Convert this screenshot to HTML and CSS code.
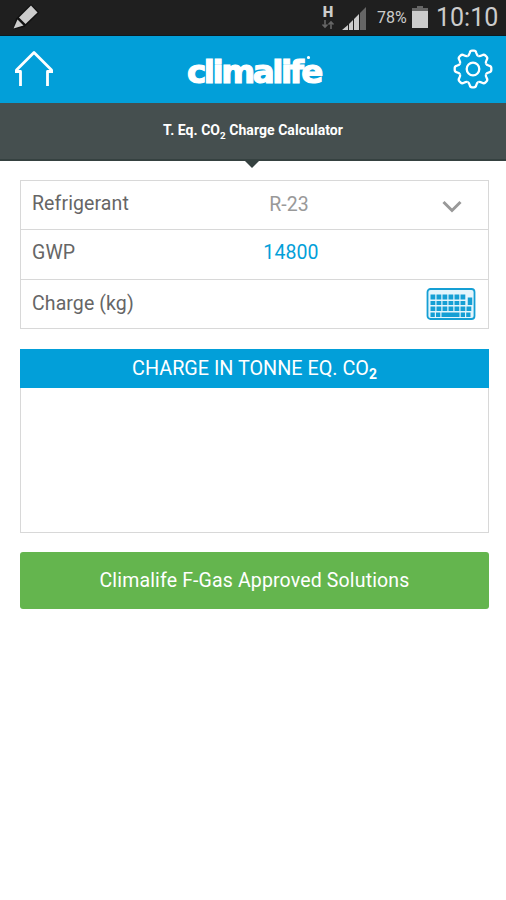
FILE: index.html
```
<!DOCTYPE html>
<html lang="en">
<head>
    <meta charset="UTF-8">
    <meta name="viewport" content="width=device-width, initial-scale=1.0">
    <title>T. Eq. CO2 Charge Calculator</title>
    <link rel="stylesheet" href="styles.css">
</head>
<body>
    <div class="status">
        <svg class="pencil" width="28" height="28" viewBox="0 0 28 28">
            <path d="M1 26.500l3-11L19 1l8.500 8.500L12.500 24z" fill="#111"/>
            <path d="M7 14.500L19 2.500l6.500 7L13.500 21z" fill="#ccc"/>
            <path d="M5.500 16.500l6 6-10 3z" fill="#ccc"/>
        </svg>
        <div class="network">
            <span>H</span>
            <svg width="14" height="9" viewBox="0 0 14 9" fill="none" stroke="#666" stroke-width="1.600">
                <path d="M4 0v7M1.500 4.500L4 7l2.500-2.500M10 9V2M7.500 4.500L10 2l2.500 2.500"/>
            </svg>
        </div>
        <svg class="signal" width="25" height="23" viewBox="0 0 25 23">
            <path d="M0 23l6-5v5zM7 23v-6l4-4v10zM12 23V12l5-5v16z" fill="#ccc"/>
            <path d="M18 23V6l6-6v23z" fill="#666"/>
        </svg>
        <span class="percent">78%</span>
        <svg class="battery" width="16" height="22" viewBox="0 0 16 22">
            <path d="M5 0h6v2H5zM0 2h16v3H0z" fill="#666"/>
            <path d="M0 5h16v17H0z" fill="#ccc"/>
        </svg>
        <span class="clock">10:10</span>
    </div>

    <header>
        <svg class="home" width="40" height="38" viewBox="0 0 40 38" fill="none" stroke="#fff" stroke-width="2.800">
            <path d="M1 21.500h5.500V36M39 21.500h-5.500V36M2 20.500L20 2.500l18 18" stroke-linejoin="round"/>
        </svg>
        <svg class="logo" width="140" height="34" viewBox="0 0 140 34">
            <text x="4" y="30" textLength="134" lengthAdjust="spacingAndGlyphs">climalife</text>
            <circle cx="125.500" cy="4.500" r="1"/>
        </svg>
        <svg class="gear" width="40" height="40" viewBox="-20 -20 40 40" fill="none" stroke="#fff" stroke-width="2.300">
            <defs>
                <path id="tooth" d="M-5.400-13C-4.100-13.500-3.700-14.500-3.300-16Q-2.800-18.300-1-18.300H1Q2.800-18.300 3.300-16C3.700-14.500 4.100-13.500 5.400-13"/>
            </defs>
            <use href="#tooth"/>
            <use href="#tooth" transform="rotate(45)"/>
            <use href="#tooth" transform="rotate(90)"/>
            <use href="#tooth" transform="rotate(135)"/>
            <use href="#tooth" transform="rotate(180)"/>
            <use href="#tooth" transform="rotate(225)"/>
            <use href="#tooth" transform="rotate(270)"/>
            <use href="#tooth" transform="rotate(315)"/>
            <circle r="6.300"/>
        </svg>
    </header>

    <h1>T. Eq. CO<span class="sub">2</span> Charge Calculator</h1>

    <main>
        <div class="fields">
            <div class="row">
                <span class="label">Refrigerant</span>
                <span class="value muted">R-23</span>
                <svg class="chevron" width="20" height="14" viewBox="0 0 20 14" fill="none" stroke="#999" stroke-width="3">
                    <path d="M1.500 2L10 10.500 18.500 2"/>
                </svg>
            </div>
            <div class="row">
                <span class="label">GWP</span>
                <span class="value">14800</span>
            </div>
            <div class="row">
                <span class="label">Charge (kg)</span>
                <svg class="keyboard" width="50" height="32" viewBox="0 0 50 32" fill="none" stroke="#159fd4">
                    <rect x="1.500" y="1" width="47" height="30" rx="3" fill="#e4f5fc" stroke-width="1.800"/>
                    <path d="M4.500 9h36" stroke-width="5" stroke-dasharray="4.800 1.200"/>
                    <path d="M4.500 15h36" stroke-width="4" stroke-dasharray="4.800 1.200"/>
                    <path d="M44 9.500v7.500" stroke-width="4.500"/>
                    <path d="M4.500 20.800h42" stroke-width="4.500" stroke-dasharray="4.800 1.200"/>
                    <path d="M4.500 26.800h42" stroke-width="4.500" stroke-dasharray="4.300 1.200 4.300 1.200 18 1.200 4.300 1.200 4.300 2"/>
                </svg>
            </div>
        </div>

        <section class="result">
            <h2>CHARGE IN TONNE EQ. CO<span class="sub">2</span></h2>
        </section>

        <button type="button">Climalife F-Gas Approved Solutions</button>
    </main>
</body>
</html>
```
FILE: styles.css
```
* {
    box-sizing: border-box;
    margin: 0;
    padding: 0;
}

:root {
    --blue: #029fd9;
    --line: #d8d8d8;
}

body {
    font-family: Roboto, "Liberation Sans", sans-serif;
    background: #fff;
    color: #666;
}

svg {
    display: block;
    flex: none;
}

.status {
    display: flex;
    align-items: flex-start;
    height: 36px;
    padding: 0 8px 0 12px;
    background: #1f1f1f;
    border-bottom: 1px solid #0c1b22;
    color: #ccc;
}

.pencil {
    margin-top: 3px;
}

.network {
    display: flex;
    flex-direction: column;
    align-items: center;
    margin: 5px 7px 0 auto;
    font-size: 15px;
    font-weight: 900;
    line-height: 15px;
}

.signal {
    margin-top: 7px;
}

.percent {
    width: 31px;
    margin-left: 10px;
    font-size: 16px;
    line-height: 36px;
    white-space: nowrap;
}

.battery {
    margin: 6px 0 0 4px;
}

.clock {
    width: 62px;
    margin-left: 8px;
    font-size: 25px;
    line-height: 35px;
    white-space: nowrap;
}

header {
    display: flex;
    align-items: center;
    justify-content: space-between;
    height: 67px;
    padding: 0 13px 0 14px;
    background: var(--blue);
}

.home,
.gear {
    margin-bottom: 1px;
}

.logo {
    margin-right: 1px;
    overflow: visible;
    font: 700 32px "DejaVu Sans", sans-serif;
    letter-spacing: -2.4px;
    fill: #fff;
    stroke: #fff;
    stroke-width: 1.2px;
}

h1 {
    position: relative;
    height: 58px;
    background: #454f4f;
    border-bottom: 2px solid #354140;
    color: #fff;
    font-size: 14px;
    font-weight: 700;
    line-height: 55px;
    text-align: center;
    letter-spacing: 0.05px;
}

h1::after {
    content: "";
    position: absolute;
    top: 57px;
    left: 244px;
    border: 8.5px solid transparent;
    border-top-color: #354140;
    border-bottom: 0;
}

.sub {
    position: relative;
    top: 4px;
    font-size: 0.7em;
    font-weight: 700;
}

main {
    padding: 19px 17px 0 20px;
}

.fields {
    border: 1px solid var(--line);
}

.row {
    display: grid;
    grid-template-columns: 180px 158px 1fr;
    align-items: center;
    height: 48px;
    padding: 0 12px 0 11px;
}

.row + .row {
    height: 50px;
    border-top: 1px solid var(--line);
}

.row:last-child {
    height: 49px;
}

.label,
.value {
    padding-bottom: 3px;
    font-size: 19.5px;
    line-height: 24px;
    letter-spacing: 0.1px;
}

.value {
    color: var(--blue);
    text-align: center;
}

.row:last-child .label {
    padding-bottom: 1px;
}

.muted {
    padding-bottom: 0;
    padding-right: 4px;
    color: #999;
}

.chevron {
    justify-self: end;
    margin: 3px 14px 0 0;
}

.keyboard {
    grid-column: 3;
    justify-self: end;
}

.result {
    height: 184px;
    margin-top: 20px;
    border: 1px solid var(--line);
    border-top: 0;
}

h2 {
    height: 39px;
    margin: 0 -1px;
    background: var(--blue);
    color: #fff;
    font-size: 19.8px;
    font-weight: 400;
    line-height: 39px;
    text-align: center;
}

button {
    display: block;
    width: 100%;
    height: 57px;
    margin-top: 19px;
    padding-bottom: 1px;
    border: 0;
    border-radius: 3px;
    background: #64b54e;
    color: #fff;
    font: 400 19.5px Roboto, sans-serif;
    letter-spacing: 0.15px;
}
```
